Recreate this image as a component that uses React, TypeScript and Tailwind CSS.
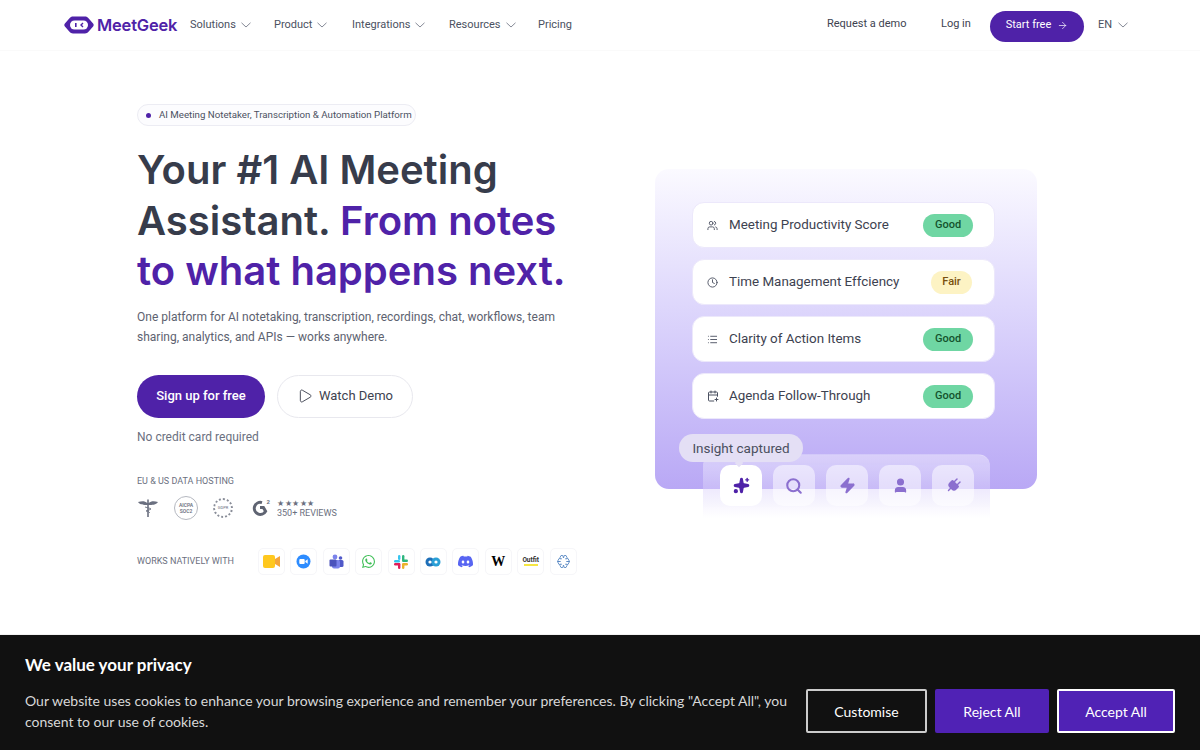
import React from "react";
import { Users, Clock, List, CalendarPlus, Play, Search, Zap, User, Plug, Sparkles, ArrowRight } from "lucide-react";
import { SiWhatsapp, SiDiscord } from "react-icons/si";

const brand = "#4f22a8";

function Caret() {
  return (
    <svg width="10" height="6" viewBox="0 0 10 6" fill="none" stroke="#777c8a" strokeWidth="0.9">
      <polyline points="0.5,0.8 5,5 9.500,0.8" />
    </svg>
  );
}

function NavItem({ label, w, caret = true }: { label: string; w: string; caret?: boolean }) {
  return (
    <div className={`-mt-[3px] flex items-center gap-[5px] text-[11px] text-[#4b5161] ${w}`}>
      <span>{label}</span>
      {caret && <Caret />}
    </div>
  );
}

function Logo() {
  return (
    <svg width="30" height="18" viewBox="0 0 30 18">
      <path d="M9 0.5h12c1.500 0 2.500.5 3.500 1.700l4.600 5.300c.8 1 .8 2 0 3l-4.600 5.300c-1 1.200-2 1.700-3.500 1.700H9c-1.500 0-2.500-.5-3.500-1.700L.9 10.500c-.8-1-.8-2 0-3l4.600-5.300C6.500 1 7.500.5 9 .5z" fill="#4f22a8" />
      <rect x="6" y="4.500" width="18" height="9" rx="4.500" fill="#fff" />
      <rect x="11" y="7" width="1.600" height="4" fill="#4f22a8" />
      <path d="M19 7l-2 2 2 2" stroke="#4f22a8" strokeWidth="1.400" fill="none" />
    </svg>
  );
}

function Row({ icon, label, tone }: { icon: React.ReactNode; label: string; tone: "good" | "fair" }) {
  return (
    <div className="flex h-[46px] w-[303px] items-center rounded-[12px] border border-[#ece8fb] bg-white pl-[14px] pr-[21px]">
      <div className="flex w-[22px] text-[#4b5161]">{icon}</div>
      <span className="flex-1 text-[13.4px] text-[#3d4250]">{label}</span>
      {tone === "good" ? (
        <span className="flex h-[23px] w-[50px] items-center justify-center rounded-full bg-[#6fd6a3] text-[11px] font-medium text-[#14532d]">Good</span>
      ) : (
        <span className="mr-[1px] flex h-[23px] w-[41px] items-center justify-center rounded-full bg-[#fdf3c4] text-[11px] font-medium text-[#78500f]">Fair</span>
      )}
    </div>
  );
}

function Tile({ children, active }: { children: React.ReactNode; active?: boolean }) {
  return (
    <div className={`flex h-[41px] w-[42px] items-center justify-center rounded-[10px] ${active ? "bg-white" : "bg-white/50"}`}>
      {children}
    </div>
  );
}

function Badge({ children }: { children: React.ReactNode }) {
  return <div className="flex h-[27px] w-[27px] items-center justify-center rounded-[5px] border border-[#f6f6f9] bg-white">{children}</div>;
}

export default function App() {
  return (
    <div className="relative h-[750px] w-[1200px] overflow-hidden bg-white font-['Roboto',sans-serif]">
      <header className="flex h-[51px] items-center border-b border-[#fafafa] pl-[64px] pt-[3px]">
        <div className="-mt-[3px] flex w-[126px] items-center gap-[3px]">
          <Logo />
          <span className="font-['Inter',sans-serif] text-[16.5px] font-semibold tracking-[-0.2px] text-[#4f22a8]">MeetGeek</span>
        </div>
        <NavItem label="Solutions" w="w-[84px]" />
        <NavItem label="Product" w="w-[78px]" />
        <NavItem label="Integrations" w="w-[97px]" />
        <NavItem label="Resources" w="w-[89px]" />
        <NavItem label="Pricing" w="w-[60px]" caret={false} />
        <div className="ml-[229px] flex items-center">
          <span className="-mt-[5px] w-[114px] text-[11px] text-[#3d4250]">Request a demo</span>
          <span className="-mt-[5px] w-[49px] text-[11px] text-[#3d4250]">Log in</span>
          <div className="flex h-[31px] w-[94px] items-center justify-center gap-[6px] rounded-full bg-[#4f22a8] pb-[2px] text-[11px] text-white">
            Start free <ArrowRight size={11} strokeWidth={1.5} />
          </div>
          <div className="-mt-[3px] ml-[14px] flex items-center gap-[6px] text-[11px] text-[#4b5161]">
            EN <Caret />
          </div>
        </div>
      </header>

      <main className="flex pl-[137px] pt-[53px]">
        <section className="w-[518px]">
          <div className="flex h-[22px] w-[279px] items-center gap-[8px] whitespace-nowrap rounded-full border border-[#ececf3] bg-[#fcfcfe] pl-[8px] text-[9.7px] text-[#4b5161]">
            <span className="h-[5px] w-[5px] rounded-full bg-[#4f22a8]" />
            AI Meeting Notetaker, Transcription &amp; Automation Platform
          </div>
          <h1 className="mt-[19px] w-[450px] font-['Inter',sans-serif] text-[40px] font-semibold leading-[50.5px] text-[#373c4b]">
            Your #1 AI Meeting Assistant. <span className="text-[#4f22a8]">From notes to what happens next.</span>
          </h1>
          <p className="mt-[10px] w-[440px] text-[12px] leading-[20px] text-[#5d6270]">
            One platform for AI notetaking, transcription, recordings, chat, workflows, team sharing, analytics, and APIs — works anywhere.
          </p>
          <div className="mt-[28px] flex gap-[12px]">
            <div className="flex h-[43px] w-[128px] items-center justify-center rounded-full bg-[#4f22a8] text-[13px] font-medium text-white">Sign up for free</div>
            <div className="flex h-[43px] w-[136px] items-center justify-center gap-[6px] rounded-full border border-[#e8e8ee] text-[13px] text-[#3d4250]">
              <Play size={16} strokeWidth={1.400} /> Watch Demo
            </div>
          </div>
          <p className="mt-[10px] text-[12px] text-[#6b7080]">No credit card required</p>
          <p className="mt-[29px] text-[9px] text-[#6b7080]">EU &amp; US DATA HOSTING</p>
          <div className="mt-[8px] flex items-center text-[#6b7080]">
            <svg width="22" height="20" viewBox="0 0 22 20" className="mr-[15px]">
              <path d="M1 4c4-1 7-1 9.200 1V1.500h1.600V5C14 3 17 3 21 4c-2 3-6 3-9.200 3v12h-1.600V7C7 7 3 7 1 4z" fill="#6b7080" />
              <path d="M8 9c3 1 5 1 6 2-1 1-3 1-5 2 2 0 3 1 4 2" fill="none" stroke="#6b7080" strokeWidth="0.9" />
            </svg>
            <div className="mr-[15px] flex h-[24px] w-[24px] flex-col items-center justify-center rounded-full border border-[#b5b8c0] text-[5px] font-semibold leading-[6px]">
              <span>AICPA</span><span>SOC2</span>
            </div>
            <div className="relative mr-[19px] flex h-[20px] w-[20px] items-center justify-center rounded-full border-2 border-dotted border-[#8a8e99] text-[4px]">GDPR</div>
            <div className="relative mr-[7px] h-[18px] w-[18px]">
              <svg width="18" height="18" viewBox="0 0 18 18">
                <path d="M10 3.600a6 6 0 1 0 3.600 8.600l-2.200-3.600H8" fill="none" stroke="#5f6472" strokeWidth="3" />
              </svg>
              <span className="absolute right-0 top-0 text-[6px] font-bold leading-[6px]">2</span>
            </div>
            <div className="flex flex-col">
              <span className="text-[8px] leading-[9px] tracking-[0.5px]">★★★★★</span>
              <span className="text-[9px] leading-[10px]">350+ REVIEWS</span>
            </div>
          </div>
          <div className="mt-[28px] flex items-center">
            <span className="w-[121px] text-[9px] text-[#6b7080]">WORKS NATIVELY WITH</span>
            <div className="flex gap-[5.4px]">
              <Badge>
                <svg width="18" height="13" viewBox="0 0 18 13"><rect width="12" height="13" rx="2" fill="#ffc81e" /><path d="M12 4l5-3v11l-5-3z" fill="#f5a53a" /></svg>
              </Badge>
              <Badge>
                <svg width="15" height="15" viewBox="0 0 15 15"><circle cx="7.500" cy="7.500" r="7" fill="#2d8cff" /><rect x="3.300" y="5" width="5.400" height="5" rx="1" fill="#fff" /><path d="M9.300 7l2.400-1.800v4.600L9.300 8z" fill="#fff" /></svg>
              </Badge>
              <Badge>
                <svg width="15" height="15" viewBox="0 0 15 15"><circle cx="6" cy="3" r="2.400" fill="#7b83eb" /><circle cx="11.500" cy="4" r="1.800" fill="#5059c9" /><rect x="9" y="6" width="5.500" height="7" rx="1.500" fill="#5059c9" /><rect x="3" y="6" width="8" height="8.500" rx="2" fill="#7b83eb" /><rect x="0.500" y="5.500" width="7" height="7" rx="1" fill="#4b53bc" /></svg>
              </Badge>
              <Badge><SiWhatsapp size={13} color="#3fbf57" /></Badge>
              <Badge>
                <svg width="14" height="14" viewBox="0 0 14 14"><rect x="0" y="5" width="6" height="2.400" rx="1.200" fill="#36c5f0" /><rect x="4" y="0" width="2.400" height="5" rx="1.200" fill="#36c5f0" /><rect x="8" y="0" width="2.400" height="6" rx="1.200" fill="#2eb67d" /><rect x="8" y="4.600" width="6" height="2.400" rx="1.200" fill="#2eb67d" /><rect x="8" y="8" width="6" height="2.400" rx="1.200" fill="#ecb22e" /><rect x="8" y="9" width="2.400" height="5" rx="1.200" fill="#ecb22e" /><rect x="4" y="8" width="2.400" height="6" rx="1.200" fill="#e01e5a" /><rect x="0" y="8" width="6" height="2.400" rx="1.200" fill="#e01e5a" /></svg>
              </Badge>
              <Badge>
                <svg width="16" height="12" viewBox="0 0 16 12"><circle cx="5" cy="6" r="4.500" fill="#1e6fb8" /><circle cx="11" cy="6" r="4.500" fill="#2a9fd6" /><circle cx="5" cy="6" r="1.600" fill="#fff" /><circle cx="11" cy="6" r="1.600" fill="#fff" /></svg>
              </Badge>
              <Badge><SiDiscord size={15} color="#5865f2" /></Badge>
              <Badge><span className="font-['Liberation_Serif',serif] text-[14px] font-bold leading-none text-black">W</span></Badge>
              <Badge>
                <div className="flex flex-col items-center">
                  <span className="text-[6.5px] font-bold leading-[6px] text-[#333]">Outfit</span>
                  <span className="mt-[1px] h-[2px] w-[14px] bg-[#f5e642]" />
                </div>
              </Badge>
              <Badge>
                <svg width="15" height="15" viewBox="0 0 15 15" fill="none" stroke="#5b8ac4" strokeWidth="0.9"><path d="M5 1.500h1.800L7.500 4l.7-2.500H10l1 2-1.500 1.500L12 4.500l1.500 3H10.500h3L12 10.500 9.500 10l1.500 1.500-1 2H8.200L7.500 11l-.7 2.500H5l-1-2L5.500 10 3 10.500l-1.500-3h3-3L3 4.500 5.500 5 4 3.500z" /></svg>
              </Badge>
            </div>
          </div>
        </section>

        <section className="relative mt-[65px] h-[320px] w-[382px] rounded-[14px] bg-gradient-to-b from-[#fbfaff] to-[#b9a8f5] pl-[37px] pt-[33px]">
          <div className="flex flex-col gap-[11px]">
            <Row icon={<Users size={11} />} label="Meeting Productivity Score" tone="good" />
            <Row icon={<Clock size={11} />} label="Time Management Effciency" tone="fair" />
            <Row icon={<List size={11} />} label="Clarity of Action Items" tone="good" />
            <Row icon={<CalendarPlus size={12} />} label="Agenda Follow-Through" tone="good" />
          </div>
          <div className="absolute left-[48px] top-[285px] flex h-[64px] w-[287px] gap-[11px] rounded-t-[12px] border-t border-white/30 bg-gradient-to-b from-[#d9d0fa] to-white/0 pl-[17px] pt-[10px]">
            <Tile active><Sparkles size={17} fill={brand} color={brand} /></Tile>
            <Tile><Search size={18} strokeWidth={2.800} color="#8b6fcf" /></Tile>
            <Tile><Zap size={17} fill="#8b6fcf" color="#8b6fcf" /></Tile>
            <Tile><User size={17} fill="#8b6fcf" color="#8b6fcf" /></Tile>
            <Tile><Plug size={17} fill="#8b6fcf" color="#8b6fcf" className="rotate-45" /></Tile>
          </div>
          <div className="absolute left-[24px] top-[265px] flex h-[28px] w-[124px] items-center justify-center rounded-full bg-[#e4dff5] pt-[1px] text-[13.5px] text-[#4b4f60]">
            Insight captured
            <span className="absolute left-[57px] top-[26px] h-[6px] w-[6px] rotate-45 bg-[#e4dff5]" />
          </div>
        </section>
      </main>

      <div className="absolute bottom-0 left-0 right-0 h-[116px] border-t border-[#f2f2f2] bg-[#111] pl-[25px] pt-[19px] font-['Lato',sans-serif] text-white">
        <h2 className="text-[17px] font-bold leading-[22px]">We value your privacy</h2>
        <div className="mt-[13px] flex items-center">
          <p className="w-[781px] text-[14px] leading-[21px] text-[#d8d8d8]">
            Our website uses cookies to enhance your browsing experience and remember your preferences. By clicking "Accept All", you consent to our use of cookies.
          </p>
          <div className="flex h-[44px] w-[121px] items-center justify-center rounded-[2px] border-2 border-[#ccc] text-[14px]">Customise</div>
          <div className="ml-[8px] flex h-[44px] w-[114px] items-center justify-center rounded-[2px] bg-[#5022b5] text-[14px]">Reject All</div>
          <div className="ml-[8px] flex h-[44px] w-[118px] items-center justify-center rounded-[2px] border-2 border-white bg-[#5022b5] text-[14px]">Accept All</div>
        </div>
      </div>
    </div>
  );
}
